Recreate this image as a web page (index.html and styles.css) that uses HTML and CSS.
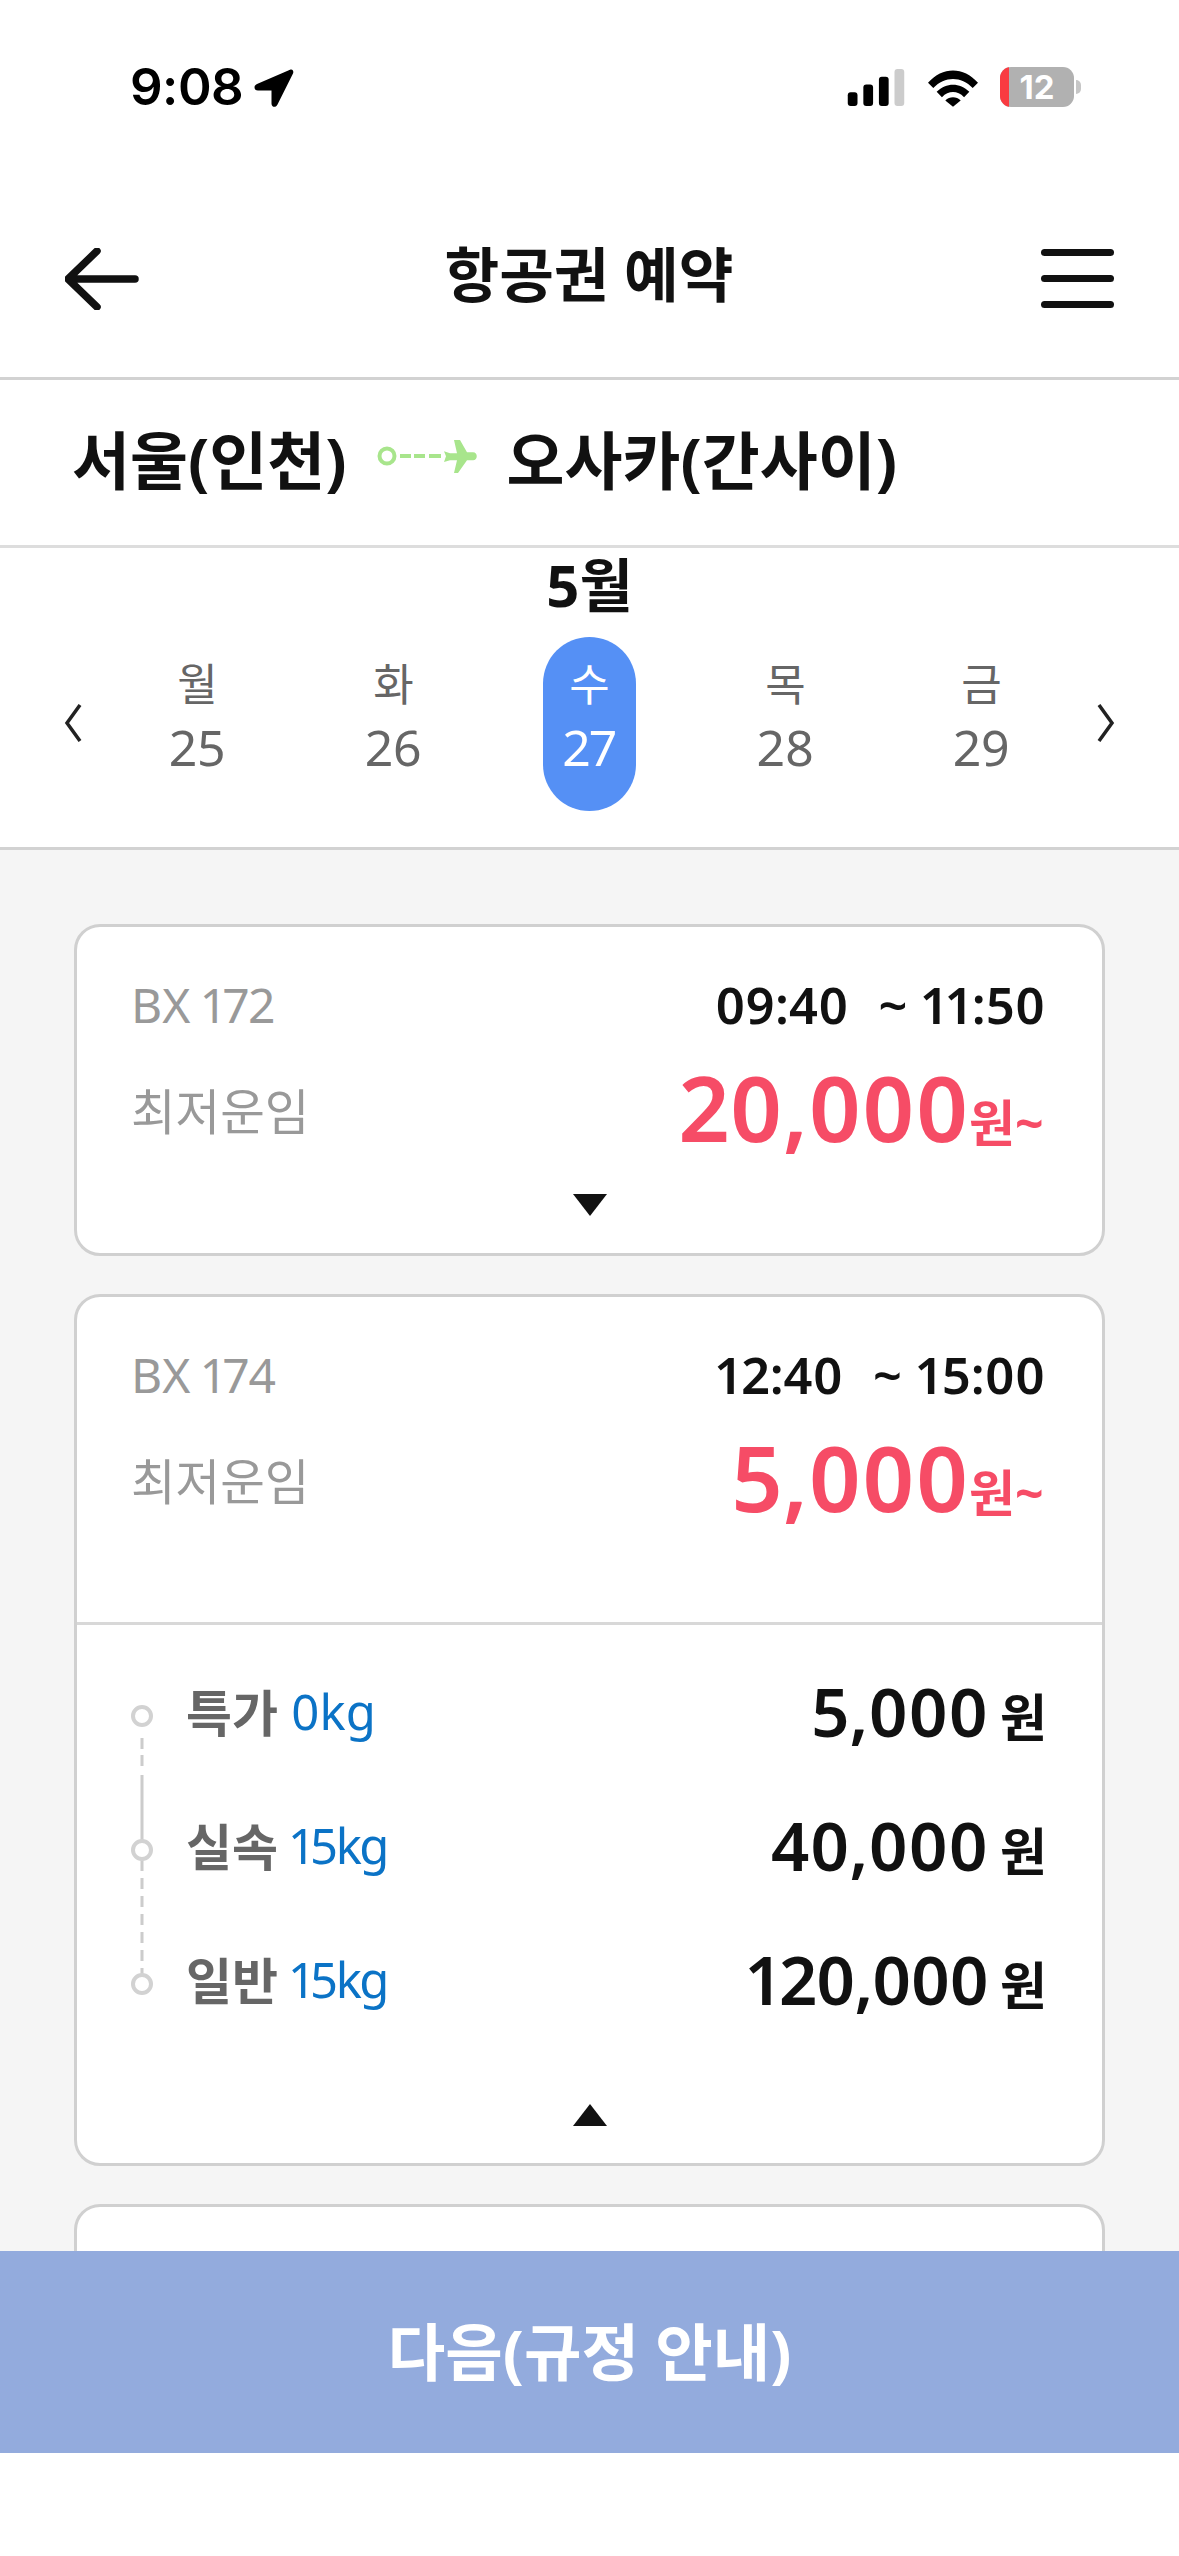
FILE: index.html
```html
<!DOCTYPE html>
<html lang="ko">
<head>
<meta charset="utf-8">
<title>항공권 예약</title>
<link rel="stylesheet" href="styles.css">
</head>
<body>
<div class="screen">
  <div class="status">
    <div class="status-left">
      <span class="clock">9:08</span>
      <svg class="loc" viewBox="0 0 40 40"><path d="M36 .8 3 15C-.8 16.700 0 21.500 4 21.500H17.500V34.500C17.500 38.500 22 39 23.500 35.500L39 4.500C40 1.800 38.500-.2 36 .8Z"/></svg>
    </div>
    <div class="status-right">
      <svg class="signal" viewBox="0 0 58 38"><rect x="0" y="24" width="10" height="14" rx="3"/><rect x="16" y="16" width="10" height="22" rx="3"/><rect x="32" y="8" width="10" height="30" rx="3"/><rect class="off" x="48" y="0" width="10" height="38" rx="3"/></svg>
      <svg class="wifi" viewBox="0 0 52 38"><path d="M0 13.500C15 -3.500 37 -3.500 52 13.500L46.500 19C34.500 6.500 17.500 6.500 5.500 19Z"/><path d="M9 23C19 13 33 13 43 23L37.500 28.500C30.500 21.500 21.500 21.500 14.500 28.500Z"/><path d="M18 32C22.500 27.500 29.500 27.500 34 32L26 38.500Z"/></svg>
      <div class="battery"><span class="battery-level"></span><span class="battery-num">12</span></div>
      <span class="battery-cap"></span>
    </div>
  </div>

  <header class="topbar">
    <svg class="back" viewBox="0 0 76 62"><path d="M70 31H4M32 3 3 31l29 28" /></svg>
    <h1 class="title">항공권 예약</h1>
    <div class="menu"><span></span><span></span><span></span></div>
  </header>

  <section class="route">
    <span>서울(인천)</span>
    <svg class="route-icon" viewBox="0 0 100 36"><circle cx="10" cy="17" r="7.500" class="ri-c"/><path d="M23 17h11M37 17h11M52 17h12" class="ri-d"/><path class="ri-p" d="M77 1h6l7 12.300h6c5 0 5 8 0 8h-6L81 34h-4l3-12.700h-7L67 23l2-5.700-2-5 6 2h7Z"/></svg>
    <span>오사카(간사이)</span>
  </section>

  <section class="calendar">
    <div class="month">5월</div>
    <div class="week">
      <svg class="chev" viewBox="0 0 18 38"><path d="M16 1 3 19l13 18"/></svg>
      <div class="days">
        <div class="day"><span class="wd">월</span><span class="dn">25</span></div>
        <div class="day"><span class="wd">화</span><span class="dn">26</span></div>
        <div class="day on"><span class="wd">수</span><span class="dn">27</span></div>
        <div class="day"><span class="wd">목</span><span class="dn">28</span></div>
        <div class="day"><span class="wd">금</span><span class="dn">29</span></div>
      </div>
      <svg class="chev" viewBox="0 0 18 38"><path d="M2 1l13 18L2 37"/></svg>
    </div>
  </section>

  <main class="list">
    <article class="card">
      <div class="summary">
        <div class="line1"><span class="flight">BX 172</span><span class="time">09:40 &nbsp;~ 11:50</span></div>
        <div class="line2"><span class="lowest">최저운임</span><span class="price">20,000<small>원~</small></span></div>
      </div>
      <div class="toggle closed"><span class="tri down"></span></div>
    </article>

    <article class="card">
      <div class="summary tall">
        <div class="line1"><span class="flight">BX 174</span><span class="time">12:40 &nbsp;~ 15:00</span></div>
        <div class="line2"><span class="lowest">최저운임</span><span class="price">5,000<small>원~</small></span></div>
      </div>
      <div class="fares">
        <svg class="rail" viewBox="0 0 4 268"><path d="M2 24v11M2 41v11M2 61V140"/><path class="rail-dash" d="M2 146V268"/></svg>
        <div class="fare"><i class="dot"></i><span class="cls">특가</span><span class="kg">0kg</span><span class="amt">5,000<small>원</small></span></div>
        <div class="fare"><i class="dot"></i><span class="cls">실속</span><span class="kg tight">15kg</span><span class="amt">40,000<small>원</small></span></div>
        <div class="fare"><i class="dot"></i><span class="cls">일반</span><span class="kg tight">15kg</span><span class="amt tight">120,000<small>원</small></span></div>
      </div>
      <div class="toggle open"><span class="tri up"></span></div>
    </article>

    <article class="card stub"></article>
  </main>

  <button class="next">다음(규정 안내)</button>
  <div class="home"></div>
</div>
</body>
</html>
```
FILE: styles.css
```css
* { box-sizing: border-box; }
html, body { margin: 0; padding: 0; background: #fff; }
body { font-family: "Noto Sans", "Noto Sans CJK KR", sans-serif; color: #111; font-variant-numeric: proportional-nums; }
.screen { width: 1179px; height: 2556px; display: flex; flex-direction: column; overflow: hidden; }

.status { height: 180px; flex: none; display: flex; justify-content: space-between; padding: 58px 98px 0 130px; }
.status-left { display: flex; align-items: flex-start; gap: 11px; }
.clock { font-family: Inter, sans-serif; font-weight: 600; font-size: 51px; line-height: 58px; color: #000; letter-spacing: -.5px; }
.loc { width: 40px; height: 40px; margin-top: 11px; fill: #000; }
.status-right { display: flex; align-items: flex-start; }
.signal { width: 58px; height: 37px; margin-top: 11px; fill: #000; }
.off { fill: #ccc; }
.wifi { width: 50px; height: 38px; margin: 11px 0 0 23px; fill: #000; }
.battery { width: 74px; height: 40px; margin: 9px 0 0 22px; border-radius: 11px; background: #b1b1b1; position: relative; overflow: hidden; display: flex; align-items: center; justify-content: center; }
.battery-level { position: absolute; left: 0; top: 0; bottom: 0; width: 9px; background: #f93b41; }
.battery-num { font-family: Inter, sans-serif; font-weight: 700; font-size: 33px; line-height: 40px; color: #fff; }
.battery-cap { width: 5px; height: 14px; margin: 22px 0 0 2px; background: #c6c6c6; border-radius: 0 7px 7px 0; }

.topbar { height: 200px; flex: none; display: flex; align-items: center; justify-content: space-between; padding: 0 65px 0 65px; border-bottom: 3px solid #d2d2d2; }
.back { width: 76px; height: 62px; fill: none; stroke: #111; stroke-width: 7.500; stroke-linecap: round; stroke-linejoin: round; }
.title { margin: 0 4px 10px 0; font-size: 59.500px; line-height: 80px; font-weight: 700; color: #111; }
.menu { width: 73px; display: flex; flex-direction: column; gap: 18.500px; }
.menu span { height: 7.500px; background: #111; border-radius: 4px; }

.route { height: 168px; flex: none; display: flex; align-items: center; gap: 30px; padding: 0 0 12px 72px; border-bottom: 3px solid #ddd; font-size: 63px; font-weight: 700; }
.route-icon { width: 100px; height: 36px; }
.ri-c { fill: none; stroke: #a8e58c; stroke-width: 4; }
.ri-d { fill: none; stroke: #a8e58c; stroke-width: 4; }
.ri-p { fill: #a8e58c; }

.calendar { height: 302px; flex: none; display: flex; flex-direction: column; border-bottom: 3px solid #d2d2d2; }
.month { font-size: 58px; line-height: 74px; font-weight: 700; text-align: center; flex: none; }
.week { display: flex; align-items: center; justify-content: space-between; padding: 15px 64px 0; }
.chev { width: 18px; height: 38px; margin-top: -2px; fill: none; stroke: #222; stroke-width: 3.500; }
.days { display: grid; grid-template-columns: repeat(5, 196px); justify-items: center; }
.day { width: 93px; height: 174px; border-radius: 46.500px; display: flex; flex-direction: column; align-items: center; padding-top: 16px; color: #666; }
.day.on { background: #5590f5; color: #fff; }
.wd { font-size: 44px; line-height: 62px; }
.dn { font-size: 50px; line-height: 64px; }

.list { flex: 1; min-height: 0; background: #f5f5f5; overflow: hidden; padding: 74px 74px 0; display: flex; flex-direction: column; gap: 38px; }
.card { flex: none; background: #fff; border: 3px solid #d0d0d0; border-radius: 26px; }
.summary { padding: 42px 57px 0 54px; height: 247px; }
.summary.tall { height: 328px; border-bottom: 3px solid #d8d8d8; }
.line1, .line2 { display: flex; justify-content: space-between; align-items: center; }
.line1 { height: 70px; }
.line2 { height: 105px; margin-top: 15px; }
.flight { font-size: 48px; color: #999; }
.lowest { font-size: 48.500px; color: #999; margin-top: 5px; }
.time { font-size: 50.500px; font-weight: 600; color: #111; word-spacing: 2px; }
.price { font-size: 90px; line-height: 105px; font-weight: 600; color: #f64c66; margin: 18px 1.500px 0 0; }
.price small { font-size: 50px; font-weight: 700; margin-left: 0; }
.toggle { display: flex; justify-content: center; }
.toggle.closed { height: 79px; padding-top: 20px; }
.toggle.open { height: 88px; padding-top: 29px; }
.tri { width: 0; height: 0; border-left: 17px solid transparent; border-right: 17px solid transparent; }
.tri.down { border-top: 22px solid #111; }
.tri.up { border-bottom: 22px solid #111; }

.fares { position: relative; padding: 42px 57px 0 54px; display: flex; flex-direction: column; gap: 44px; height: 450px; }
.rail { position: absolute; left: 63px; top: 89px; width: 4px; height: 268px; fill: none; stroke: #ccc; stroke-width: 3; }
.rail-dash { stroke-dasharray: 11 7; }
.fare { display: flex; align-items: center; height: 90px; position: relative; }
.dot { width: 22px; height: 22px; flex: none; border: 4px solid #d2d2d2; background: #fff; border-radius: 50%; margin: 8px 33px 0 0; }
.cls { font-size: 50px; font-weight: 700; color: #666; margin-bottom: 3px; }
.kg { font-size: 49px; color: #0b73c6; margin: 0 0 3px 13px; }
.kg.tight { letter-spacing: -2.500px; }
.amt { margin: 0 -2px 3px auto; font-size: 67px; font-weight: 600; color: #111; }
.amt.tight { letter-spacing: -1.200px; }
.amt small { font-size: 51px; font-weight: 700; margin-left: 12px; letter-spacing: 0; }
.stub { height: 200px; }

.next { flex: none; height: 202px; border: 0; background: #93abdd; color: #fff; font-family: inherit; font-size: 62.500px; font-weight: 700; padding: 0 0 8px; }
.home { flex: none; height: 103px; background: #fff; }
```
